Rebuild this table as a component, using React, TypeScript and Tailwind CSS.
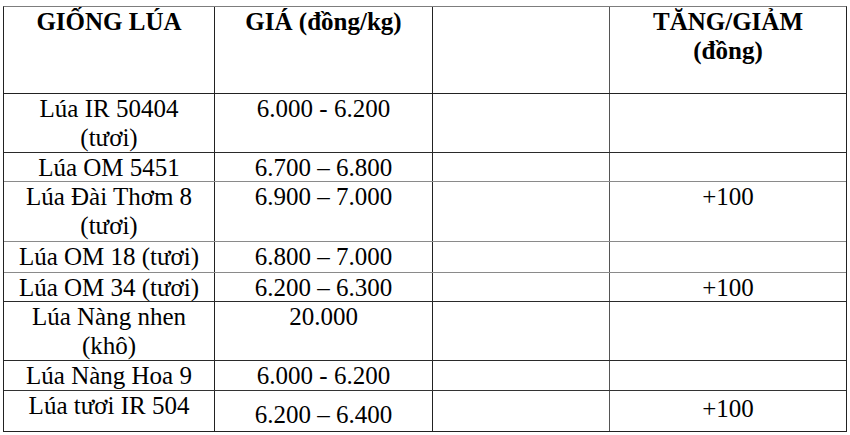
import React from "react";

type Row = {
  h: string;
  name: React.ReactNode;
  price: string;
  change?: string;
  border: string;
  pricePad?: string;
  changePad?: string;
};

const rows: Row[] = [
  { h: "h-[59px]", name: <>Lúa IR 50404<br />(tươi)</>, price: "6.000 - 6.200", border: "border-b-[#2a2a2a]" },
  { h: "h-[29px]", name: "Lúa OM 5451", price: "6.700 – 6.800", border: "border-b-[#8a8a8a]" },
  { h: "h-[60px]", name: <>Lúa Đài Thơm 8<br />(tươi)</>, price: "6.900 – 7.000", change: "+100", border: "border-b-[#8a8a8a]" },
  { h: "h-[31px]", name: "Lúa OM 18 (tươi)", price: "6.800 – 7.000", border: "border-b-[#8a8a8a]" },
  { h: "h-[29px]", name: "Lúa OM 34 (tươi)", price: "6.200 – 6.300", change: "+100", border: "border-b-[#2a2a2a]" },
  { h: "h-[59px]", name: <>Lúa Nàng nhen<br />(khô)</>, price: "20.000", border: "border-b-[#2a2a2a]" },
  { h: "h-[30px]", name: "Lúa Nàng Hoa 9", price: "6.000 - 6.200", border: "border-b-[#333333]" },
  { h: "h-[40px]", name: "Lúa tươi IR 504", price: "6.200 – 6.400", change: "+100", border: "border-b-0", pricePad: "pt-[9px]", changePad: "pt-[3px]" },
];

export default function App() {
  return (
    <div className="w-[850px] h-[435px] bg-white pl-[3px] pt-[6px] text-black font-['Liberation_Serif','Times_New_Roman',serif]">
      <div className="w-[844px] border border-[#222222] border-t-[#7d7d7d] text-[25px] leading-[29px]">
        <div className="flex h-[87px] border-b border-b-[#222222] font-bold">
          <div className="w-[211px] shrink-0 border-r border-r-[#222222] text-center">GIỐNG LÚA</div>
          <div className="w-[218px] shrink-0 border-r border-r-[#222222] text-center">GIÁ (đồng/kg)</div>
          <div className="w-[177px] shrink-0 border-r border-r-[#555555]"></div>
          <div className="w-[236px] shrink-0 text-center">
            TĂNG/GIẢM
            <br />
            (đồng)
          </div>
        </div>
        {rows.map((r, i) => (
          <div key={i} className={`flex ${r.h} border-b ${r.border}`}>
            <div className="w-[211px] shrink-0 border-r border-r-[#222222] text-center">{r.name}</div>
            <div className={`w-[218px] shrink-0 border-r border-r-[#222222] text-center ${r.pricePad ?? ""}`}>{r.price}</div>
            <div className="w-[177px] shrink-0 border-r border-r-[#555555]"></div>
            <div className={`w-[236px] shrink-0 text-center ${r.changePad ?? ""}`}>{r.change ?? ""}</div>
          </div>
        ))}
      </div>
    </div>
  );
}
